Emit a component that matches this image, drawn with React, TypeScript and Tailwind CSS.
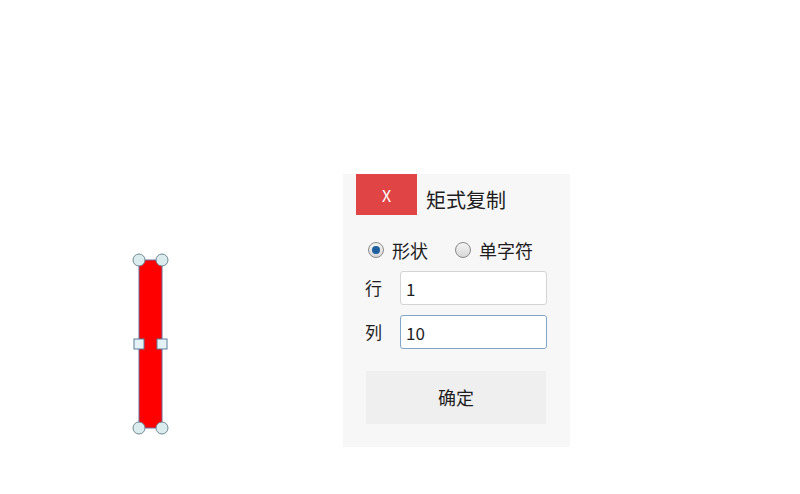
import { ReactNode } from 'react'

function Handle({ x, y, square }: { x: number; y: number; square?: boolean }) {
    return square ? (
        <rect x={x - 5} y={y - 5} width={10} height={10} fill="#e4f1f6" stroke="#5a7f9a" strokeWidth={1} />
    ) : (
        <circle cx={x} cy={y} r={6} fill="#dbecef" stroke="#6f8794" strokeWidth={1} />
    )
}

function Radio({ checked, children }: { checked?: boolean; children: ReactNode }) {
    return (
        <label className="flex items-center gap-[8px]">
            <span className="w-[16px] h-[16px] rounded-full border border-[#8a8a8a] bg-gradient-to-b from-[#f4f4f4] to-[#d8d8d8] flex items-center justify-center">
                {checked && <span className="w-[8px] h-[8px] rounded-full bg-[#1f5f9e]" />}
            </span>
            <span>{children}</span>
        </label>
    )
}

export default function App() {
    return (
        <div className="relative w-[800px] h-[494px] bg-white overflow-hidden font-['Noto_Sans_CJK_SC','Liberation_Sans',sans-serif] text-[#1e1e1e]">
            {/* shape on canvas */}
            <svg className="absolute left-0 top-0" width={800} height={494}>
                <rect x={139} y={260} width={23} height={168} rx={6} fill="#ff0000" stroke="#6b6f9a" strokeWidth={1} />
                <Handle x={139} y={260} />
                <Handle x={162} y={260} />
                <Handle x={139} y={428} />
                <Handle x={162} y={428} />
                <Handle x={139} y={344} square />
                <Handle x={162} y={344} square />
            </svg>

            {/* dialog */}
            <div className="absolute left-[343px] top-[174px] w-[227px] h-[273px] bg-[#f7f7f7] flex flex-col">
                <div className="flex items-center">
                    <button className="ml-[13px] w-[61px] h-[41px] bg-[#e04444] text-white text-[16px] flex items-center justify-center">X</button>
                    <span className="ml-[9px] mt-[10px] text-[20px] leading-none">矩式复制</span>
                </div>
                <div className="flex items-center gap-[27px] ml-[25px] mt-[26px] text-[18px] h-[18px]">
                    <Radio checked>形状</Radio>
                    <Radio>单字符</Radio>
                </div>
                <div className="flex items-center ml-[22px] mt-[12px] text-[17px]">
                    <span className="w-[35px]">行</span>
                    <input
                        readOnly
                        value="1"
                        className="w-[147px] h-[34px] bg-white border border-[#d4d4d4] rounded-[3px] px-[5px] text-[17px] outline-none"
                    />
                </div>
                <div className="flex items-center ml-[22px] mt-[10px] text-[17px]">
                    <span className="w-[35px]">列</span>
                    <input
                        readOnly
                        value="10"
                        className="w-[147px] h-[34px] bg-white border border-[#7fa6c8] rounded-[3px] px-[5px] text-[17px] outline-none"
                    />
                </div>
                <button className="ml-[23px] mt-[22px] w-[180px] h-[53px] bg-[#efefef] text-[18px]">确定</button>
            </div>
        </div>
    )
}
